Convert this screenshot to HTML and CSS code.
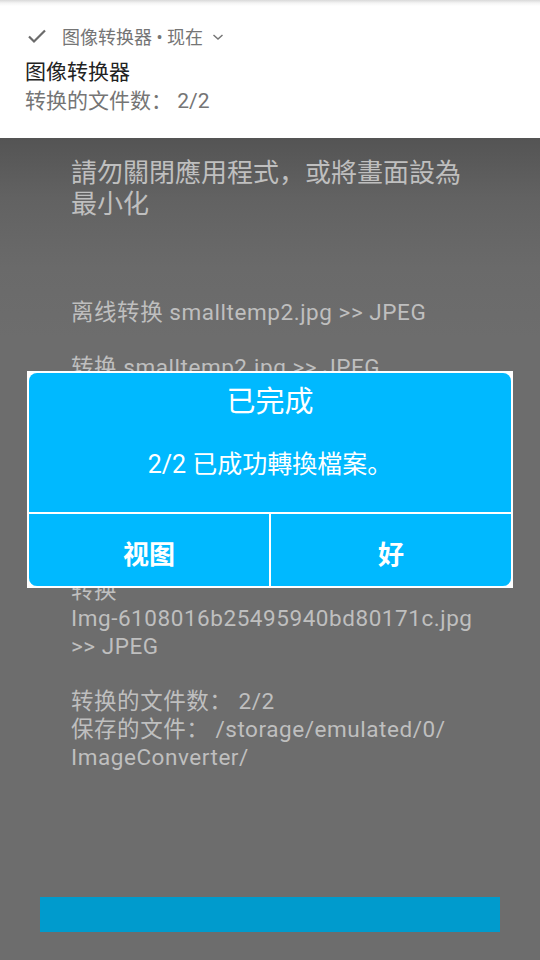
FILE: index.html
```html
<!DOCTYPE html>
<html lang="zh-CN">
<head>
<meta charset="utf-8">
<title>图像转换器</title>
<link rel="stylesheet" href="styles.css">
</head>
<body>
<div class="screen">
  <div class="notif">
    <div class="notif-header">
      <svg class="check" width="20" height="16" viewBox="0 0 20 16"><path d="M2 8.5 L7 13.5 L18 2.5" fill="none" stroke="#6b6b6b" stroke-width="2.2"/></svg>
      <span>图像转换器 • 现在</span>
      <svg class="chev" width="12" height="8" viewBox="0 0 12 8"><path d="M1.5 2 L6 6 L10.5 2" fill="none" stroke="#757575" stroke-width="1.5"/></svg>
    </div>
    <div class="notif-title">图像转换器</div>
    <div class="notif-text">转换的文件数： 2/2</div>
  </div>

  <div class="app">
    <div class="warn">請勿關閉應用程式，或將畫面設為<br>最小化</div>
    <div class="log">
      <p class="entry">离线转换 smalltemp2.jpg &gt;&gt; JPEG</p>
      <p class="entry">转换 smalltemp2.jpg &gt;&gt; JPEG</p>
      <p class="entry under">转换<br>Img-6108016b25495940bd80171c.jpg<br>&gt;&gt; JPEG</p>
      <p class="entry">转换的文件数： 2/2<br>保存的文件： /storage/emulated/0/<br>ImageConverter/</p>
    </div>
    <div class="bar"></div>
  </div>

  <div class="dialog">
    <div class="dialog-inner">
      <div class="d-body">
        <div class="d-title">已完成</div>
        <div class="d-msg">2/2 已成功轉換檔案。</div>
      </div>
      <div class="d-buttons">
        <div class="d-btn">视图</div>
        <div class="d-btn">好</div>
      </div>
    </div>
  </div>
</div>
</body>
</html>
```
FILE: styles.css
```css
* { box-sizing: border-box; }
html, body { margin: 0; padding: 0; }
body {
  width: 540px;
  height: 960px;
  overflow: hidden;
  font-family: Roboto, "Noto Sans CJK SC", sans-serif;
  background: #6d6d6d;
}
.screen {
  position: relative;
  width: 540px;
  height: 960px;
  display: flex;
  flex-direction: column;
}
.notif {
  height: 138px;
  background: linear-gradient(to bottom, #d9d9d9 0px, #f4f4f4 3px, #ffffff 6px);
  padding: 24px 0 0 25px;
  flex: none;
}
.notif-header {
  display: flex;
  align-items: center;
  height: 24px;
  font-size: 18px;
  color: #757575;
  margin-bottom: 10px;
}
.check { margin-left: 2px; margin-right: 15px; }
.chev { margin-left: 9px; margin-top: 2px; }
.notif-title {
  font-size: 21px;
  line-height: 28px;
  color: #222222;
}
.notif-text {
  font-size: 21px;
  line-height: 30px;
  color: #757575;
}
.app {
  flex: 1;
  display: flex;
  flex-direction: column;
  padding: 20px 30px 28px 71px;
  background: linear-gradient(to bottom, #545454 0px, #626262 60px, #6a6a6a 130px, #6d6d6d 200px);
  color: #bfbfbf;
}
.warn {
  font-size: 26px;
  line-height: 31px;
}
.log {
  margin-top: 78px;
  font-size: 22.5px;
  line-height: 28px;
  letter-spacing: 0.55px;
}
.entry {
  margin: 0 0 27px 0;
}
.entry.under {
  margin-top: 195px;
}
.bar {
  margin-top: auto;
  margin-left: -31px;
  margin-right: 10px;
  height: 35px;
  background: #009bcd;
}
.dialog {
  position: absolute;
  left: 27px;
  top: 371px;
  width: 486px;
  height: 217px;
  background: #ffffff;
  padding: 2px;
}
.dialog-inner {
  height: 100%;
  background: #00b9ff;
  border-radius: 8px;
  overflow: hidden;
  display: flex;
  flex-direction: column;
  color: #ffffff;
}
.d-body {
  height: 139px;
  text-align: center;
  padding-top: 13px;
}
.d-title {
  font-size: 29px;
  line-height: 32px;
}
.d-msg {
  margin-top: 31px;
  font-size: 25px;
  line-height: 32px;
}
.d-buttons {
  flex: 1;
  display: grid;
  grid-template-columns: 240px 1fr;
  gap: 2px;
  border-top: 2px solid #ffffff;
  background: #ffffff;
}
.d-btn {
  background: #00b9ff;
  display: flex;
  align-items: center;
  justify-content: center;
  font-size: 26px;
  font-weight: bold;
  padding-top: 4px;
}
```
